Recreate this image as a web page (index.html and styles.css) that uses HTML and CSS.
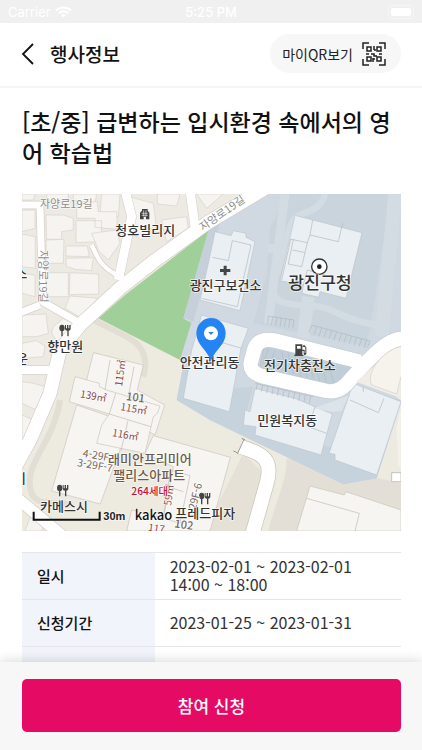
FILE: index.html
```html
<!DOCTYPE html>
<html lang="ko">
<head>
  <meta charset="UTF-8">
  <meta name="viewport" content="width=device-width, initial-scale=1">
  <title>행사정보</title>
  <link rel="stylesheet" href="styles.css">
</head>
<body>

  <div class="status-bar">
    <div class="carrier">
      <span>Carrier</span>
      <svg width="17" height="12" viewBox="0 0 17 12" fill="none" stroke="#fff" stroke-width="2">
        <path d="M1 4.5C5 .5 12 .5 16 4.5M3.7 7.2c2.7-2.6 6.9-2.6 9.6 0"/>
        <path d="M8.5 11.5L6 9c1.4-1.3 3.6-1.3 5 0z" fill="#fff" stroke="none"/>
      </svg>
    </div>
    <span class="time">5:25 PM</span>
    <div class="battery"><span></span></div>
  </div>

  <header class="header">
    <button class="back-btn" aria-label="뒤로">
      <svg width="14" height="22" viewBox="0 0 14 22" fill="none" stroke="#111" stroke-width="1.8">
        <path d="M12 1L2 11l10 10"/>
      </svg>
    </button>
    <h1>행사정보</h1>
    <button class="qr-btn">
      마이QR보기
      <svg width="24" height="24" viewBox="0 0 24 24" fill="none" stroke="#222" stroke-width="1.5">
        <path d="M1 7V1h6M17 1h6v6M23 17v6h-6M7 23H1v-6"/>
        <path d="M5 5h4v4H5zM15 5h4v4h-4zM5 15h4v4H5zM15 15h4v4h-4z"/>
        <path d="M12 4v4M12 8h2M4 12h3M9 12h3v2h3M17 12h3M11 16v4M13 17h-2"/>
      </svg>
    </button>
  </header>

  <main class="content">
    <h2>[초/중] 급변하는 입시환경 속에서의 영어 학습법</h2>

    <svg class="map" viewBox="6 12 1137 1011" role="img" aria-label="지도">
      <rect x="6" y="12" width="1137" height="1011" fill="#edeae3"/>

      <!-- apartment grounds -->
      <path d="M235 385L470 512V630L970 883L1070 865L1143 700V1023H6V900L120 620L170 440z" fill="#edeae0"/>
      <path d="M225 393C300 430 350 450 365 480S378 530 370 560" fill="none" stroke="#e2ded4" stroke-width="18"/>
      <path d="M120 630C100 760 20 810 30 890S130 920 150 950" fill="none" stroke="#e2ded4" stroke-width="18"/>
      <path d="M800 805L1143 880V1023H745C760 950 800 880 800 805z" fill="#e3dfd6"/>
      <path d="M670 790L600 930L550 1023H680L730 850z" fill="#e5e1d7"/>

      <!-- public office lot -->
      <path d="M566 120L745 12H1143V460L1060 520L1143 640L1070 865L970 883L570 690L470 630L490 525L480 505z" fill="#d0d9e1"/>
      <path d="M566 120L600 100L520 395L490 385z" fill="#c5d0da"/>
      <path d="M805 12H1110L1066 325L1040 470L700 400L740 250L750 110z" fill="#c9d4dc"/>
      <path d="M540 560L630 590L570 690L470 630L490 525zM630 595L700 590L670 700L1000 790L1070 865L970 883L570 690zM1130 625L1143 630L1070 865L950 810z" fill="#c6d3dc"/>
      <g fill="none" stroke="#d4dce3" stroke-width="20">
        <path d="M915 12C900 70 850 60 825 85S800 180 770 250S770 340 830 345L900 350C950 360 970 390 1075 405"/>
        <path d="M795 12L745 400M745 175H785" stroke-width="26"/>
        <path d="M1125 12L1085 440" stroke-width="40"/>
        <path d="M865 320L850 440" stroke-width="38"/>
      </g>

      <!-- park -->
      <path d="M566 120L490 385L514 398L480 510L235 385L315 315z" fill="#a1cf99"/>

      <!-- small houses -->
      <g fill="#f6f4f0" stroke="#d6d2ca" stroke-width="2">
        <path d="M6 12H45L40 30H6zM80 12H145V30H80zM160 12H230L225 40L160 30zM245 12H300L295 80L240 70z"/>
        <path d="M6 60H45V115L6 125zM78 75H130L160 85V120L125 125V148H80z"/>
        <path d="M170 35H232L235 65H290L292 118L225 112V85H170zM168 92H245L243 155L168 158z"/>
        <path d="M6 132L46 140V235L6 230zM78 150L132 148L130 220H78z"/>
        <path d="M138 168H202L208 200L138 198zM138 205L220 203L215 242L165 238L138 228z"/>
        <path d="M215 130L290 120L300 160L265 210L235 180z"/>
        <path d="M6 250L45 255V320L6 310zM78 248H145V320H85L75 300z"/>
        <path d="M150 248L236 252V312L148 314zM150 318L235 325L180 382L135 355z"/>
        <path d="M6 375L78 372L85 430L50 440H6zM100 410L130 385L165 400L160 440L115 460L95 430z"/>
        <path d="M6 460L50 452L75 468L70 500L6 505z"/>
        <path d="M335 22L400 40L408 100L365 150L325 120zM412 12H480L470 48L412 42zM425 90L500 80L505 115L440 155z"/>
        <path d="M530 12H610L560 55zM6 575L40 580L75 590L50 660L6 640zM6 675L40 690L20 750H6z"/>
        <path d="M35 970L75 995L65 1023H15zM80 1003L110 1023H70z"/>
      </g>

      <!-- streets -->
      <g fill="none" stroke="#d2cec7" stroke-linejoin="round">
        <path d="M-10 45H60L68 335L180 400M60 345L-5 370" stroke-width="25"/>
        <path d="M315 0L335 80L295 270M510 0L525 110" stroke-width="30"/>
        <path d="M215 165C235 210 245 230 290 255" stroke-width="17"/>
        <path d="M760 -20L560 100L400 215L305 290L180 405L120 480L90 610L30 750L-20 840" stroke-width="44"/>
        <path d="M-10 540H100" stroke-width="30"/>
        <path d="M-20 915L130 1040" stroke-width="38"/>
      </g>
      <g fill="none" stroke="#fff" stroke-linejoin="round">
        <path d="M-10 45H60L68 335L180 400M60 345L-5 370" stroke-width="21"/>
        <path d="M315 0L335 80L295 270M510 0L525 110" stroke-width="27"/>
        <path d="M215 165C235 210 245 230 290 255" stroke-width="13"/>
        <path d="M760 -20L560 100L400 215L305 290L180 405L120 480L90 610L30 750L-20 840" stroke-width="40"/>
        <path d="M-10 540H100" stroke-width="26"/>
        <path d="M-20 915L130 1040" stroke-width="34"/>
      </g>

      <!-- office buildings -->
      <g fill="#eaeff3" stroke="#bcc4cc" stroke-width="2">
        <path d="M585 125L633 137L640 122L678 130V142L705 155L660 362L540 330L565 220z"/>
        <path d="M825 76L1026 128L978 325L900 305L896 322L846 310L850 285L780 272z"/>
        <path d="M545 375L685 415L663 475L628 665L490 625L515 480z"/>
        <path d="M705 595L825 625L885 650L937 672L903 795L705 735L708 710L670 705L675 660L690 665z"/>
        <path d="M1000 580L1143 635L1070 855L945 810V793L927 790L970 665z"/>
      </g>
      <path d="M880 655L985 618L965 663L935 665z" fill="#dce4ea"/>
      <g fill="none" stroke="#b0b8c0" stroke-width="2">
        <path d="M578 202L625 212L637 152L693 165L652 350L545 325"/>
        <path d="M878 90L870 135L955 155L968 100M810 147L862 158L845 230L805 222L820 148M818 180L855 188M862 158L870 135M850 285L862 240L915 255M812 148L785 270"/>
        <path d="M530 435L665 475M885 650L865 710L920 730M990 630L1075 668L1092 625M1030 590V605"/>
      </g>

      <!-- loop road and parking -->
      <path d="M735 460L1000 530L965 580L930 595L715 545z" fill="#c0ced8" stroke="#b3bfc9" stroke-width="2"/>
      <path d="M745 475l-15 45M765 480l-15 48M785 485l15 60M805 490l15 62M825 495l18 65M845 500l18 65M865 510l18 65M885 518l15 60M905 520l15 62M925 525l18 58" stroke="#b0bcc7" stroke-width="2"/>
      <path d="M1160 445C1100 445 1070 490 1040 515L990 570Q960 610 920 603L725 558Q685 545 693 515L703 478Q715 440 770 453L1020 515" fill="none" stroke="#c7cdd2" stroke-width="47"/>
      <path d="M1160 445C1100 445 1070 490 1040 515L990 570Q960 610 920 603L725 558Q685 545 693 515L703 478Q715 440 770 453L1020 515" fill="none" stroke="#fff" stroke-width="43"/>
      <path d="M1143 470C1100 480 1090 510 1065 525L1008 575L1143 625z" fill="#f0ede7"/>
      <path d="M1143 470C1100 475 1035 540 1055 585L1130 612L1143 560" fill="#f6f3ed" stroke="#d3cfc7" stroke-width="2"/>
      <path d="M1143 655L1130 710L1135 830H1143z" fill="#f4f1eb"/>
      <path d="M1115 848H1143V875H1115z" fill="#fff" stroke="#aaa" stroke-width="2"/>
      <g fill="none" stroke="#adb8c1" stroke-width="2">
        <path d="M745 378L822 390M745 378l-2 22M758 380l-4 25M771 382l-4 25M784 384l-4 25M797 386l-4 25M810 388l-4 25M822 390l-4 25"/>
        <path d="M875 405L1050 453M875 405l-8 22M890 410l-8 24M905 414l-8 24M920 418l-8 24M935 422l-8 24M950 426l-8 24M965 430l-8 24M980 434l-8 24M995 438l-8 24M1010 442l-8 24M1025 446l-8 24M1040 450l-8 24M1050 453l-8 20"/>
        <path d="M706 580L880 620M712 582l-4 18M728 585l-4 20M744 589l-4 20M760 593l-4 20M776 597l-4 20M792 601l-4 20M808 604l-4 20M824 608l-4 20M840 612l-4 20M856 616l-4 20M872 620l-4 20"/>
      </g>

      <!-- driveway -->
      <path d="M660 770C730 790 760 810 740 880L695 1040" fill="none" stroke="#c8c3ba" stroke-width="46"/>
      <path d="M660 770C730 790 760 810 740 880L695 1040" fill="none" stroke="#fff" stroke-width="42"/>
      <path d="M672 748L652 792M665 745l10 4M640 783l12 5" stroke="#999" stroke-width="3"/>

      <!-- apartments -->
      <g fill="#f6f5f1" stroke="#c9c4bb" stroke-width="2">
        <path d="M400 737L631 802L570 1023H320L335 960L430 985L460 830L375 790z"/>
        <path d="M170 645L300 690V780L241 942L95 903z"/>
        <path d="M220 488L370 525L352 600L434 645L405 735L250 650L200 570z"/>
        <path d="M165 560L238 580V590L260 600L420 648L412 670L400 680L375 790L230 760L245 705L268 672L148 635z"/>
        <path d="M870 888L973 915L978 905L1143 960V1023H830z"/>
      </g>
      <g fill="none" stroke="#c0bbb2" stroke-width="2">
        <path d="M270 510L255 600M342 530L325 620M287 610L268 672L392 710M324 692L303 782M450 840L510 857L480 1000L430 985L450 850M442 890L490 905M860 925L1018 970L1005 1023"/>
      </g>

      <!-- icons -->
      <g fill="#444">
        <path d="M360 88V68l6-6v-5h17v5l5 6v20h-10v-8h-7v8z"/>
        <path d="M365 70h18M365 76h18M371 61v18M378 61v18" stroke="#eee" stroke-width="2"/>
        <path d="M611 227h9v10h11v9h-11v10h-9v-10h-11v-9h11z"/>
        <path d="M826 463h21v31h3v4h-27v-4h3zM831 468v8h11v-8zM847 470l5-6 7 8v20c-3 5-7 4-8-1v-8h-4v-4h7v10h2v-17z" fill-rule="evenodd"/>
        <g id="food">
          <ellipse cx="126" cy="414" rx="8" ry="10"/>
          <path d="M124 420h4v19h-4zM135 405h3v10h3v-10h4v10h3v-10h4v12q-1 5-6 5v17h-4v-17q-6 0-7-5z"/>
        </g>
        <use href="#food" x="-7" y="480"/>
        <use href="#food" x="419" y="504"/>
      </g>
      <circle cx="898" cy="230" r="23" fill="#fff" stroke="#333" stroke-width="4"/>
      <circle cx="898" cy="230" r="7" fill="#222"/>

      <!-- place names -->
      <g class="road-name">
        <text x="60" y="53">자양로19길</text>
        <text transform="translate(56 180) rotate(90)">자양로19길</text>
        <text transform="translate(548 124) rotate(-35)">자양로19길</text>
      </g>
      <g class="size">
        <text transform="translate(306 590) rotate(-82)">115㎡</text>
        <text transform="translate(179 622) rotate(10)">139㎡</text>
        <text transform="translate(300 660) rotate(10)">115㎡</text>
        <text transform="translate(275 738) rotate(10)">116㎡</text>
        <text transform="translate(453 948) rotate(-82)">59㎡</text>
        <text transform="translate(383 1022) rotate(8)">117</text>
      </g>
      <g class="floor">
        <text transform="translate(187 800) rotate(10)">4-29F</text>
        <text transform="translate(170 828) rotate(10)">3-29F-7</text>
        <text transform="translate(527 960) rotate(-76)">29F-6</text>
        <text class="block" transform="translate(317 630) rotate(8)">101</text>
        <text class="block" transform="translate(462 1012) rotate(8)">102</text>
      </g>
      <g class="place">
        <text x="286" y="134">청호빌리지</text>
        <text x="509" y="301">광진구보건소</text>
        <text x="82" y="482">향만원</text>
        <text x="479" y="532">안전관리동</text>
        <text x="732" y="541">전기차충전소</text>
        <text x="712" y="704">민원복지동</text>
        <text x="60" y="962">카메스시</text>
        <text x="466" y="985">프레드피자</text>
        <text x="804" y="297" class="place-big">광진구청</text>
        <text x="-14" y="265">스</text>
        <text x="-12" y="518">운</text>
        <text x="-18" y="880">이</text>
      </g>
      <g class="apartment">
        <text x="264" y="823">래미안프리미어</text>
        <text x="280" y="870">팰리스아파트</text>
        <text x="334" y="916" class="homes">264세대</text>
      </g>

      <!-- scale -->
      <path d="M41 965v24h198v-24" fill="none" stroke="#111" stroke-width="6"/>
      <text x="250" y="990" class="scale">30m</text>
      <text x="344" y="990" class="kakao">kakao</text>

      <!-- pin -->
      <path d="M573 512C560 478 529 465 529 430a44 46 0 0 1 88 0C617 465 586 478 573 512z" fill="#2484f4"/>
      <circle cx="573" cy="430" r="21" fill="#fff"/>
      <path d="M565 426h16l-8 9z" fill="#2484f4"/>
    </svg>

    <table class="info">
      <tr>
        <th scope="row">일시</th>
        <td>2023-02-01 ~ 2023-02-01<br>14:00 ~ 18:00</td>
      </tr>
      <tr>
        <th scope="row">신청기간</th>
        <td>2023-01-25 ~ 2023-01-31</td>
      </tr>
      <tr>
        <th scope="row"></th>
        <td></td>
      </tr>
    </table>
  </main>

  <footer class="footer">
    <button class="apply-btn">참여 신청</button>
  </footer>

</body>
</html>
```

FILE: styles.css
```css
* {
  box-sizing: border-box;
}
body {
  margin: 0;
  height: 100vh;
  display: flex;
  flex-direction: column;
  font-family: "Noto Sans CJK KR", sans-serif;
  color: #111;
  background-color: #fff;
}
button {
  font-family: inherit;
  border: none;
  padding: 0;
  cursor: pointer;
}
.status-bar {
  display: grid;
  grid-template-columns: 1fr auto 1fr;
  align-items: center;
  height: 23px;
  padding: 0 8px;
  font-family: Inter, sans-serif;
  font-size: 13px;
  color: #fff;
  background-color: #f0f0f0;
}
.carrier {
  display: flex;
  align-items: center;
  gap: 4px;
}
.time {
  font-weight: 500;
}
.battery {
  justify-self: end;
  width: 26px;
  padding: 2px;
  border: 1px solid #f6f6f6;
  border-radius: 4px;
}
.battery span {
  display: block;
  height: 8px;
  border-radius: 2px;
  background-color: #fff;
}
.header {
  display: flex;
  align-items: center;
  gap: 15px;
  height: 65px;
  padding: 0 21px 2px;
  border-bottom: 2px solid #f4f4f4;
}
.back-btn {
  display: flex;
  background: none;
}
h1 {
  flex: 1;
  margin: 0;
  font-size: 19px;
  font-weight: 500;
}
.qr-btn {
  display: flex;
  align-items: center;
  gap: 9px;
  height: 39px;
  padding: 0 15px 0 12px;
  border-radius: 20px;
  font-size: 14px;
  color: #222;
  background-color: #f7f7f7;
}
.content {
  flex: 1;
  min-height: 0;
  padding: 18px 21px 0 22px;
  overflow: auto;
  scrollbar-width: none;
}
h2 {
  margin: 0 0 26px;
  font-size: 23px;
  font-weight: 500;
  line-height: 31px;
  word-break: break-all;
}
.map {
  display: block;
  width: 100%;
  margin-bottom: 21px;
}
.map text {
  paint-order: stroke;
  stroke: #fff;
  stroke-opacity: 0.7;
  stroke-width: 5px;
  stroke-linejoin: round;
}
.road-name {
  font-size: 33px;
  fill: #8c8c8c;
}
.place {
  font-size: 39px;
  font-weight: 500;
  fill: #333;
}
.place-big {
  font-size: 52px;
}
.size {
  font-size: 30px;
  fill: #8b4a4a;
}
.floor {
  font-size: 31px;
  fill: #75695f;
}
.block {
  font-size: 33px;
  font-weight: 500;
}
.apartment {
  font-size: 39px;
  font-weight: 500;
  fill: #6b5b4c;
}
.homes {
  font-size: 31px;
  fill: #c8102e;
}
.scale {
  font-family: "Liberation Sans", sans-serif;
  font-size: 33px;
  font-weight: bold;
  fill: #222;
}
.kakao {
  font-size: 39px;
  font-weight: 500;
  fill: #111;
}
.info {
  width: 100%;
  border-collapse: collapse;
  table-layout: fixed;
}
.info tr {
  height: 47px;
  border-top: 1px solid #e6e6e9;
}
.info th {
  width: 35%;
  padding: 0 15px 2px;
  font-size: 15px;
  font-weight: 500;
  text-align: left;
  background-color: #f1f4fa;
}
.info td {
  padding: 0 15px 2px;
  font-size: 16px;
  line-height: 18px;
  color: #333;
}
.footer {
  position: relative;
  padding: 17px 21px 18px 22px;
  background-color: #f7f7f7;
  box-shadow: 0 0 12px rgba(0, 0, 0, 0.18);
}
.apply-btn {
  display: block;
  width: 100%;
  height: 53px;
  border-radius: 5px;
  font-size: 17px;
  font-weight: 500;
  color: #fff;
  background-color: #e50b65;
}
```
